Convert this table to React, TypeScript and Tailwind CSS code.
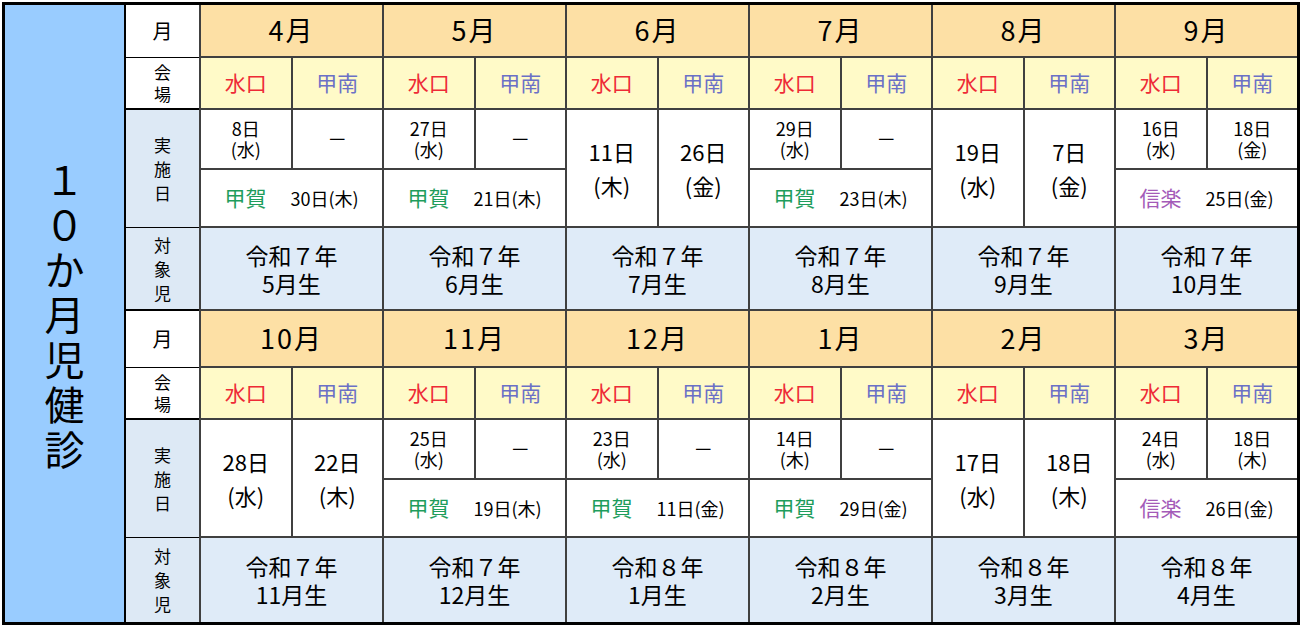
import React from "react";

type Extra = { name: string; color: string; date: string };
type Month = {
  m: string;
  type: "A" | "B";
  a: [string, string];
  b: [string, string] | null;
  extra?: Extra;
  target: [string, string];
};

const GREEN = "#1e9d5c";
const PURPLE = "#a45bb8";

const top: Month[] = [
  { m: "4月", type: "A", a: ["8日", "(水)"], b: null, extra: { name: "甲賀", color: GREEN, date: "30日(木)" }, target: ["令和７年", "5月生"] },
  { m: "5月", type: "A", a: ["27日", "(水)"], b: null, extra: { name: "甲賀", color: GREEN, date: "21日(木)" }, target: ["令和７年", "6月生"] },
  { m: "6月", type: "B", a: ["11日", "(木)"], b: ["26日", "(金)"], target: ["令和７年", "7月生"] },
  { m: "7月", type: "A", a: ["29日", "(水)"], b: null, extra: { name: "甲賀", color: GREEN, date: "23日(木)" }, target: ["令和７年", "8月生"] },
  { m: "8月", type: "B", a: ["19日", "(水)"], b: ["7日", "(金)"], target: ["令和７年", "9月生"] },
  { m: "9月", type: "A", a: ["16日", "(水)"], b: ["18日", "(金)"], extra: { name: "信楽", color: PURPLE, date: "25日(金)" }, target: ["令和７年", "10月生"] },
];

const bottom: Month[] = [
  { m: "10月", type: "B", a: ["28日", "(水)"], b: ["22日", "(木)"], target: ["令和７年", "11月生"] },
  { m: "11月", type: "A", a: ["25日", "(水)"], b: null, extra: { name: "甲賀", color: GREEN, date: "19日(木)" }, target: ["令和７年", "12月生"] },
  { m: "12月", type: "A", a: ["23日", "(水)"], b: null, extra: { name: "甲賀", color: GREEN, date: "11日(金)" }, target: ["令和８年", "1月生"] },
  { m: "1月", type: "A", a: ["14日", "(木)"], b: null, extra: { name: "甲賀", color: GREEN, date: "29日(金)" }, target: ["令和８年", "2月生"] },
  { m: "2月", type: "B", a: ["17日", "(水)"], b: ["18日", "(木)"], target: ["令和８年", "3月生"] },
  { m: "3月", type: "A", a: ["24日", "(水)"], b: ["18日", "(木)"], extra: { name: "信楽", color: PURPLE, date: "26日(金)" }, target: ["令和８年", "4月生"] },
];

function SmallDate({ d }: { d: [string, string] | null }) {
  if (!d) return <span className="text-[20px] leading-none">－</span>;
  return (
    <div className="flex flex-col items-center text-[18px] leading-[21px]">
      <span>{d[0]}</span>
      <span>{d[1]}</span>
    </div>
  );
}

function BigDate({ d }: { d: [string, string] }) {
  return (
    <div className="flex flex-col items-center text-[22px] leading-[34px]">
      <span>{d[0]}</span>
      <span>{d[1]}</span>
    </div>
  );
}

function MonthCol({ mo, monthH, targetH, last }: { mo: Month; monthH: string; targetH: string; last: boolean }) {
  return (
    <div className="flex-1 flex flex-col border-l-2 border-[#404040]">
      <div className={monthH + " bg-[#fde0a5] border-b-2 border-[#404040] flex items-center justify-center text-[27px] tracking-[2px] text-black"}>
        {mo.m}
      </div>
      <div className="h-[52px] bg-[#fffac8] border-b-2 border-[#404040] flex text-[21px]">
        <div className="flex-1 border-r-2 border-[#404040] flex items-center justify-center text-[#ee2a36]">水口</div>
        <div className="flex-1 flex items-center justify-center text-[#6b70c6]">甲南</div>
      </div>
      <div className="h-[118px] bg-white border-b-2 border-[#404040] text-black">
        {mo.type === "A" ? (
          <div className="h-full flex flex-col">
            <div className="h-[60px] border-b-2 border-[#404040] flex">
              <div className="flex-1 border-r-2 border-[#404040] flex items-center justify-center">
                <SmallDate d={mo.a} />
              </div>
              <div className="flex-1 flex items-center justify-center">
                <SmallDate d={mo.b} />
              </div>
            </div>
            <div className="flex-1 flex items-center justify-center gap-[24px]">
              <span className="text-[21px]" style={{ color: mo.extra!.color }}>{mo.extra!.name}</span>
              <span className="text-[18px]">{mo.extra!.date}</span>
            </div>
          </div>
        ) : (
          <div className="h-full flex">
            <div className="flex-1 border-r-2 border-[#404040] flex items-center justify-center">
              <BigDate d={mo.a} />
            </div>
            <div className="flex-1 flex items-center justify-center">
              <BigDate d={mo.b!} />
            </div>
          </div>
        )}
      </div>
      <div className={targetH + " bg-[#dfebf8] flex flex-col items-center justify-center text-[23px] leading-[28px] text-black " + (last ? "" : "border-b-2 border-[#404040]")}>
        <span>{mo.target[0]}</span>
        <span>{mo.target[1]}</span>
      </div>
    </div>
  );
}

function Section({ months, monthH, targetH, last }: { months: Month[]; monthH: string; targetH: string; last: boolean }) {
  return (
    <div className="flex">
      <div className="w-[73px] flex flex-col text-black">
        <div className={monthH + " bg-white border-b border-black flex items-center justify-center text-[20px]"}>月</div>
        <div className="h-[52px] bg-white border-b-2 border-black flex flex-col items-center justify-center text-[17px] leading-[22px]">
          <span>会</span>
          <span>場</span>
        </div>
        <div className="h-[118px] bg-[#dde9f5] border-b border-black flex flex-col items-center justify-center text-[17px] leading-[24px]">
          <span>実</span>
          <span>施</span>
          <span>日</span>
        </div>
        <div className={targetH + " bg-[#dde9f5] flex flex-col items-center justify-center text-[17px] leading-[24px] " + (last ? "" : "border-b-2 border-black")}>
          <span>対</span>
          <span>象</span>
          <span>児</span>
        </div>
      </div>
      {months.map((mo) => (
        <MonthCol key={mo.m} mo={mo} monthH={monthH} targetH={targetH} last={last} />
      ))}
    </div>
  );
}

export default function App() {
  return (
    <div className="w-[1302px] h-[627px] bg-white pt-[2px] pl-[2px] font-['Noto_Sans_CJK_JP','Noto_Sans',sans-serif]">
      <div className="w-[1298px] h-[623px] border-[3px] border-black flex">
        <div className="w-[121px] bg-[#99ccff] border-r-2 border-black flex flex-col items-center justify-center text-[40px] leading-[45px] text-black">
          {"１０か月児健診".split("").map((c, i) => (
            <span key={i}>{c}</span>
          ))}
        </div>
        <div className="flex-1 flex flex-col">
          <Section months={top} monthH="h-[53px]" targetH="h-[83px]" last={false} />
          <Section months={bottom} monthH="h-[57px]" targetH="h-[84px]" last={true} />
        </div>
      </div>
    </div>
  );
}
